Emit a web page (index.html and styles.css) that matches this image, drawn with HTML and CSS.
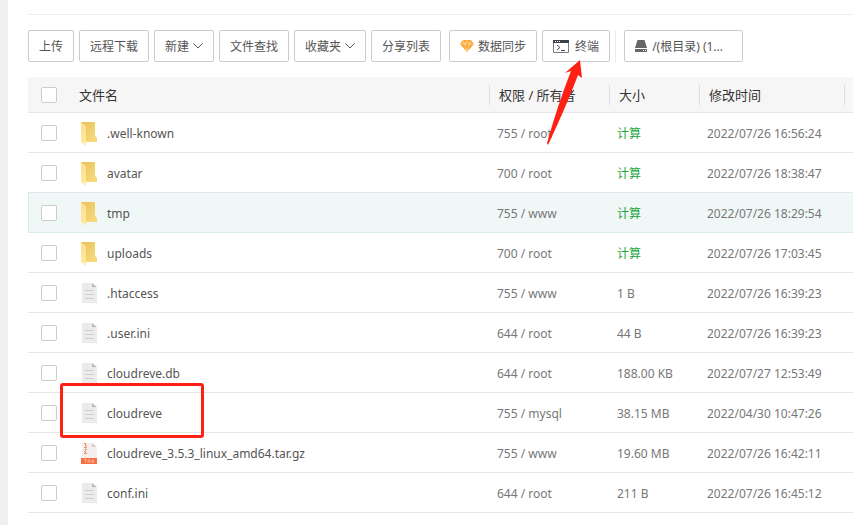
FILE: index.html
```html
<!DOCTYPE html>
<html lang="zh-CN">
<head>
<meta charset="utf-8">
<title>文件管理</title>
<link rel="stylesheet" href="styles.css">
</head>
<body>
<svg class="defs" width="0" height="0" aria-hidden="true">
  <defs>
    <linearGradient id="back" x1="0" y1="0" x2="1" y2="1"><stop offset="0" stop-color="#e9c25a"/><stop offset="1" stop-color="#fbdc80"/></linearGradient>
    <linearGradient id="flap" x1="0" y1="0" x2="0" y2="1"><stop offset="0" stop-color="#fbdf8c"/><stop offset="1" stop-color="#ffe9a4"/></linearGradient>
    <symbol id="folder" viewBox="0 0 18 24">
      <path d="M1 0H15V14L17 16V20H6L1 19Z" fill="url(#back)"/>
      <path d="M15 14L17 16V20H15Z" fill="#f8d97c"/>
      <path d="M1 0L6 4V24L1 20Z" fill="url(#flap)"/>
    </symbol>
    <symbol id="file" viewBox="0 1 18 24">
      <path d="M2 2H12L17 7V22H2Z" fill="#ebebeb"/>
      <path d="M12 2L17 6H12Z" fill="#b9b9b9"/>
      <path d="M5 9.500H14M5 13.500H14M5 17.500H14" stroke="#cfcfcf"/>
    </symbol>
    <symbol id="archive" viewBox="0 1 18 24">
      <path d="M2 2H12L17 7V17H2Z" fill="#f4efed"/>
      <path d="M12 2L17 6H12Z" fill="#d8d0cd"/>
      <path d="M4 2.500H6M5 4.500H7M4 6.500H7M5 8.500H7M4 10.500H6M4 12.500H7" stroke="#ef8668"/>
      <path d="M5.500 3V12" stroke="#f1a48d"/>
      <path d="M1 17H17V23H1Z" fill="#fa6f42"/>
      <path d="M4 18.500H7M5.500 18.500V22M8 22V19H10V22M8 20.500H10M12 22V19H14V20.500H12L14 22" fill="none" stroke="#fdb59c" stroke-width=".8"/>
    </symbol>
  </defs>
</svg>
<main class="page">
  <div class="toolbar">
    <div class="group">
      <button type="button">上传</button>
      <button type="button">远程下载</button>
      <button type="button">新建<svg class="chevron" viewBox="0 0 10 6"><path d="M.5 .5L5 5L9.500 .5"/></svg></button>
      <button type="button">文件查找</button>
      <button type="button">收藏夹<svg class="chevron" viewBox="0 0 10 6"><path d="M.5 .5L5 5L9.500 .5"/></svg></button>
      <button type="button">分享列表</button>
    </div>
    <div class="group">
      <button type="button"><svg class="gem" viewBox="0 0 14 12"><path d="M3 0H11L14 4L7 12L0 4Z" fill="#faa32c"/><path d="M.5 4H13.500M3 .5L4.500 4L7 11L9.500 4L11 .5M4.500 4L7 .5L9.500 4" fill="none" stroke="#ffe0aa" stroke-width=".8"/></svg>数据同步</button>
      <button type="button"><svg class="terminal" viewBox="0 0 16 13"><path d="M.5 .5H15.500V12.500H.5Z" fill="#fff" stroke="#777f8b"/><path d="M0 0H16V3H0Z" fill="#3c414a"/><path d="M2 1.500H3M4 1.500H5M6 1.500H7" stroke="#fff"/><path d="M4 5L7 7.500L4 10M8 10.500H12" fill="none" stroke="#454b55"/></svg>终端</button>
    </div>
    <div class="group disks">
      <button type="button"><svg class="disk" viewBox="0 0 12 12"><path d="M2.500 0H9.500L12 8H0Z"/><path d="M0 9H12V12H0Z"/><path d="M8 10.500H9M10 10.500H11" stroke="#fff"/></svg>/(根目录) (1...</button>
    </div>
  </div>
  <table class="files">
    <colgroup><col class="c-check"><col><col class="c-owner"><col class="c-size"><col class="c-time"><col class="c-more"></colgroup>
    <thead>
      <tr><th><input type="checkbox" aria-label="全选"></th><th>文件名</th><th class="split">权限 / 所有者</th><th class="split">大小</th><th class="split">修改时间</th><th class="split"></th></tr>
    </thead>
    <tbody>
      <tr><td><input type="checkbox" id="f1"></td><td><label for="f1"><svg><use href="#folder"/></svg>.well-known</label></td><td>755 / root</td><td><a href="#">计算</a></td><td>2022/07/26 16:56:24</td><td></td></tr>
      <tr><td><input type="checkbox" id="f2"></td><td><label for="f2"><svg><use href="#folder"/></svg>avatar</label></td><td>700 / root</td><td><a href="#">计算</a></td><td>2022/07/26 18:38:47</td><td></td></tr>
      <tr class="active"><td><input type="checkbox" id="f3"></td><td><label for="f3"><svg><use href="#folder"/></svg>tmp</label></td><td>755 / www</td><td><a href="#">计算</a></td><td>2022/07/26 18:29:54</td><td></td></tr>
      <tr><td><input type="checkbox" id="f4"></td><td><label for="f4"><svg><use href="#folder"/></svg>uploads</label></td><td>700 / root</td><td><a href="#">计算</a></td><td>2022/07/26 17:03:45</td><td></td></tr>
      <tr><td><input type="checkbox" id="f5"></td><td><label for="f5"><svg><use href="#file"/></svg>.htaccess</label></td><td>755 / www</td><td>1 B</td><td>2022/07/26 16:39:23</td><td></td></tr>
      <tr><td><input type="checkbox" id="f6"></td><td><label for="f6"><svg><use href="#file"/></svg>.user.ini</label></td><td>644 / root</td><td>44 B</td><td>2022/07/26 16:39:23</td><td></td></tr>
      <tr><td><input type="checkbox" id="f7"></td><td><label for="f7"><svg><use href="#file"/></svg>cloudreve.db</label></td><td>644 / root</td><td>188.00 KB</td><td>2022/07/27 12:53:49</td><td></td></tr>
      <tr><td><input type="checkbox" id="f8"></td><td><label for="f8"><svg><use href="#file"/></svg>cloudreve</label></td><td>755 / mysql</td><td>38.15 MB</td><td>2022/04/30 10:47:26</td><td></td></tr>
      <tr><td><input type="checkbox" id="f9"></td><td><label for="f9"><svg><use href="#archive"/></svg>cloudreve_3.5.3_linux_amd64.tar.gz</label></td><td>755 / www</td><td>19.60 MB</td><td>2022/07/26 16:42:11</td><td></td></tr>
      <tr><td><input type="checkbox" id="f10"></td><td><label for="f10"><svg><use href="#file"/></svg>conf.ini</label></td><td>644 / root</td><td>211 B</td><td>2022/07/26 16:45:12</td><td></td></tr>
    </tbody>
  </table>
</main>
<svg class="arrow" viewBox="0 0 36 86" aria-hidden="true"><path d="M34 1L36 19L32 16Q20 48 2 86L1 84Q12 45 25 12L19 14Z"/></svg>
<div class="mark" aria-hidden="true"></div>
</body>
</html>
```
FILE: styles.css
```css
* { box-sizing: border-box; }
body {
  margin: 0;
  min-height: 100vh;
  position: relative;
  background: #fff;
  border-left: 8px solid #f0f0f0;
  color: #555;
  font: 12px/18px "Noto Sans", "Noto Sans CJK SC", sans-serif;
}
.defs { position: absolute; }
.page { padding: 14px 0 12px 20px; }
.toolbar {
  display: flex;
  gap: 8px;
  border-top: 1px solid #ebebeb;
  padding: 15px 0;
}
.group { display: flex; gap: 5px; }
.disks { border-left: 1px solid #ebebeb; padding-left: 8px; margin-left: -3px; }
button {
  display: flex;
  align-items: center;
  height: 32px;
  padding: 2px 10px 0;
  border: 1px solid #ccc;
  border-radius: 2px;
  background: #fff;
  color: #555;
  font: inherit;
  white-space: nowrap;
}
button svg { margin-bottom: 2px; }
.disks button { width: 119px; }
.chevron { width: 10px; height: 6px; margin-left: 4px; fill: none; stroke: #555; }
.gem { width: 14px; height: 12px; margin-right: 4px; }
.terminal { width: 16px; height: 13px; margin-right: 6px; }
.disk { width: 12px; height: 12px; margin-right: 5px; fill: #666; }
.files {
  width: 100%;
  table-layout: fixed;
  border-collapse: separate;
  border-spacing: 0;
}
.c-check { width: 51px; }
.c-owner { width: 120px; }
.c-size { width: 90px; }
.c-time { width: 145px; }
.c-more { width: 9px; }
th {
  height: 36px;
  padding: 0;
  background: linear-gradient(#ddd, #ddd) 0 8px / 0 20px no-repeat #f6f6f6;
  border-bottom: 1px solid #e6e6e6;
  color: #333;
  font-size: 13px;
  font-weight: 400;
  text-align: left;
}
.split { padding-left: 10px; background-size: 1px 20px; }
td {
  height: 40px;
  padding: 2px 0 0 8px;
  border-bottom: 1px solid #e6e6e6;
  color: #777;
  white-space: nowrap;
}
th:first-child, td:first-child { padding: 0 0 0 13px; }
td:nth-child(2) { padding-left: 1px; }
td:last-child, th:last-child { padding: 0; }
.active td { background: #f0f8f7; border-bottom-color: #d8ede7; }
.active td:first-child { border-left: 1px solid #d8ede7; padding-left: 12px; }
input {
  appearance: none;
  display: block;
  width: 16px;
  height: 16px;
  margin: 0;
  border: 1px solid #ccc;
  border-radius: 2px;
  background: #fff;
}
label { display: flex; align-items: center; gap: 9px; color: #555; }
label svg { width: 18px; height: 24px; }
a { color: #20a53a; text-decoration: none; }
.arrow { position: absolute; left: 538px; top: 59px; width: 36px; height: 86px; fill: #ff2015; }
.mark {
  position: absolute;
  left: 52px;
  top: 383px;
  width: 144px;
  height: 55px;
  border: 3px solid #ff2015;
  border-radius: 3px;
}
```
